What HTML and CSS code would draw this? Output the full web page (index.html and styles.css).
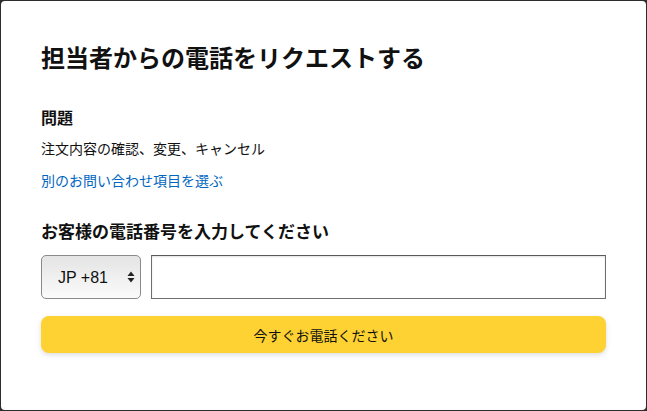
FILE: index.html
```html
<!DOCTYPE html>
<html lang="ja">
<head>
  <meta charset="UTF-8" />
  <meta name="viewport" content="width=device-width, initial-scale=1.0" />
  <title>担当者からの電話をリクエストする</title>
  <link rel="stylesheet" href="styles.css">
</head>
<body>
  <div class="modal">
    <h1 class="modal-title">担当者からの電話をリクエストする</h1>

    <h2 class="issue-label">問題</h2>
    <p class="issue-text">注文内容の確認、変更、キャンセル</p>
    <a class="issue-link" href="#">別のお問い合わせ項目を選ぶ</a>

    <h2 class="phone-label">お客様の電話番号を入力してください</h2>
    <div class="phone-row">
      <div class="country-select">
        <select class="country">
          <option>JP +81</option>
        </select>
        <svg class="country-arrows" width="8" height="12" viewBox="0 0 8 12">
          <path d="M4 0.5 L7.5 5 L0.5 5 Z" fill="#222" />
          <path d="M4 11.5 L7.5 7 L0.5 7 Z" fill="#222" />
        </svg>
      </div>
      <input class="phone-input" type="tel" />
    </div>

    <button class="call-button">今すぐお電話ください</button>
  </div>
</body>
</html>
```

FILE: styles.css
```css
html, body {
  margin: 0;
  padding: 0;
  background: #2d2d2d;
}
body {
  font-family: "Noto Sans CJK JP", "Noto Sans", sans-serif;
  color: #111;
}
.modal {
  margin: 1px;
  height: 409px;
  box-sizing: border-box;
  padding: 41px 40px 0 40px;
  background: #fff;
  border-radius: 4px;
}
.modal-title {
  margin: 0;
  font-size: 24px;
  line-height: 30px;
  font-weight: 700;
}
.issue-label {
  margin: 35px 0 0;
  font-size: 16px;
  line-height: 20px;
  font-weight: 700;
}
.issue-text {
  margin: 11px 0 0;
  font-size: 14px;
  line-height: 20px;
}
.issue-link {
  display: block;
  margin-top: 12px;
  font-size: 14px;
  line-height: 20px;
  color: #0066c0;
  text-decoration: none;
}
.phone-label {
  margin: 29px 0 0;
  font-size: 17px;
  line-height: 24px;
  font-weight: 700;
}
.phone-row {
  display: flex;
  gap: 10px;
  margin-top: 12px;
  height: 44px;
}
.country-select {
  position: relative;
  width: 100px;
  flex: none;
}
.country {
  appearance: none;
  -webkit-appearance: none;
  width: 100%;
  height: 100%;
  box-sizing: border-box;
  padding: 0 0 0 16px;
  border: 1px solid #8a8a8a;
  border-radius: 5px;
  background: linear-gradient(#e4e4e4, #fbfbfb);
  font-family: "Liberation Sans", "Noto Sans", sans-serif;
  font-size: 16px;
  color: #111;
}
.country-arrows {
  position: absolute;
  right: 6px;
  top: 16px;
  pointer-events: none;
}
.phone-input {
  flex: 1;
  min-width: 0;
  box-sizing: border-box;
  height: 100%;
  border: 1px solid #6e6e6e;
  border-top-color: #5a5a5a;
  box-shadow: inset 0 1px 2px rgba(0,0,0,0.12);
  font-size: 16px;
  padding: 0 10px;
}
.call-button {
  display: block;
  width: 100%;
  height: 37px;
  margin-top: 17px;
  border: none;
  border-radius: 8px;
  background: #fed233;
  box-shadow: 0 2px 5px rgba(180,180,180,0.45);
  font-family: "Noto Sans CJK JP", sans-serif;
  font-size: 14px;
  color: #111;
}
```
